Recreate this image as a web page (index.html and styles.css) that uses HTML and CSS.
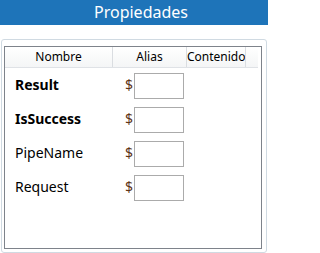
FILE: index.html
```html
<!DOCTYPE html>
<html>
<head>
<meta charset="utf-8">
<link rel="stylesheet" href="styles.css">
</head>
<body>
<div class="titlebar"><span class="title">Propiedades</span></div>
<div class="group">
  <div class="list">
    <div class="header">
      <div class="hcell c-name">Nombre</div>
      <div class="hcell c-alias">Alias</div>
      <div class="hcell c-content">Contenido</div>
      <div class="hcell c-fill"></div>
    </div>
    <div class="row">
      <div class="name bold">Result</div>
      <div class="alias"><span class="dollar">$</span><span class="box"></span></div>
    </div>
    <div class="row">
      <div class="name bold">IsSuccess</div>
      <div class="alias"><span class="dollar">$</span><span class="box"></span></div>
    </div>
    <div class="row">
      <div class="name">PipeName</div>
      <div class="alias"><span class="dollar">$</span><span class="box"></span></div>
    </div>
    <div class="row">
      <div class="name">Request</div>
      <div class="alias"><span class="dollar">$</span><span class="box"></span></div>
    </div>
  </div>
</div>
</body>
</html>
```
FILE: styles.css
```css
html, body {
  margin: 0;
  padding: 0;
  background: #ffffff;
  font-family: "Noto Sans", "Open Sans", sans-serif;
}
body {
  width: 268px;
  height: 253px;
  overflow: hidden;
}
.titlebar {
  height: 25px;
  background: #1e74b9;
  display: flex;
  align-items: center;
  justify-content: center;
  padding-left: 14px;
  box-sizing: border-box;
}
.title {
  color: #ffffff;
  font-size: 16px;
  line-height: 25px;
}
.group {
  margin: 14px 0 0 1px;
  width: 266px;
  height: 214px;
  box-sizing: border-box;
  border: 1px solid #d0dae2;
  border-radius: 3px;
  padding: 6px 4px 0 2px;
}
.list {
  width: 258px;
  height: 203px;
  box-sizing: border-box;
  border: 1px solid #7e838b;
  display: flex;
  flex-direction: column;
}
.header {
  display: flex;
  height: 21px;
  box-sizing: border-box;
  border-bottom: 1px solid #dfe2e6;
  background: linear-gradient(#ffffff, #f4f5f6);
  margin-right: 3px;
}
.hcell {
  box-sizing: border-box;
  border-right: 1px solid #dadde1;
  font-size: 12px;
  line-height: 20px;
  color: #000000;
  text-align: center;
  white-space: nowrap;
  overflow: hidden;
}
.c-name { width: 108px; }
.c-alias { width: 74px; }
.c-content { width: 59px; }
.c-fill { flex: 1; border-right: none; }
.row {
  display: flex;
  height: 34px;
  align-items: flex-start;
}
.name {
  width: 108px;
  box-sizing: border-box;
  padding-left: 10px;
  padding-top: 7px;
  font-size: 14px;
  line-height: 20px;
  color: #000000;
}
.bold { font-weight: 700; }
.alias {
  display: flex;
  align-items: center;
  padding-top: 5px;
  padding-left: 12px;
}
.dollar {
  font-size: 14px;
  line-height: 20px;
  color: #5c3317;
  width: 9px;
  margin-top: -2px;
}
.box {
  display: block;
  width: 50px;
  height: 26px;
  box-sizing: border-box;
  border: 1px solid #ababab;
  background: #ffffff;
}
```
